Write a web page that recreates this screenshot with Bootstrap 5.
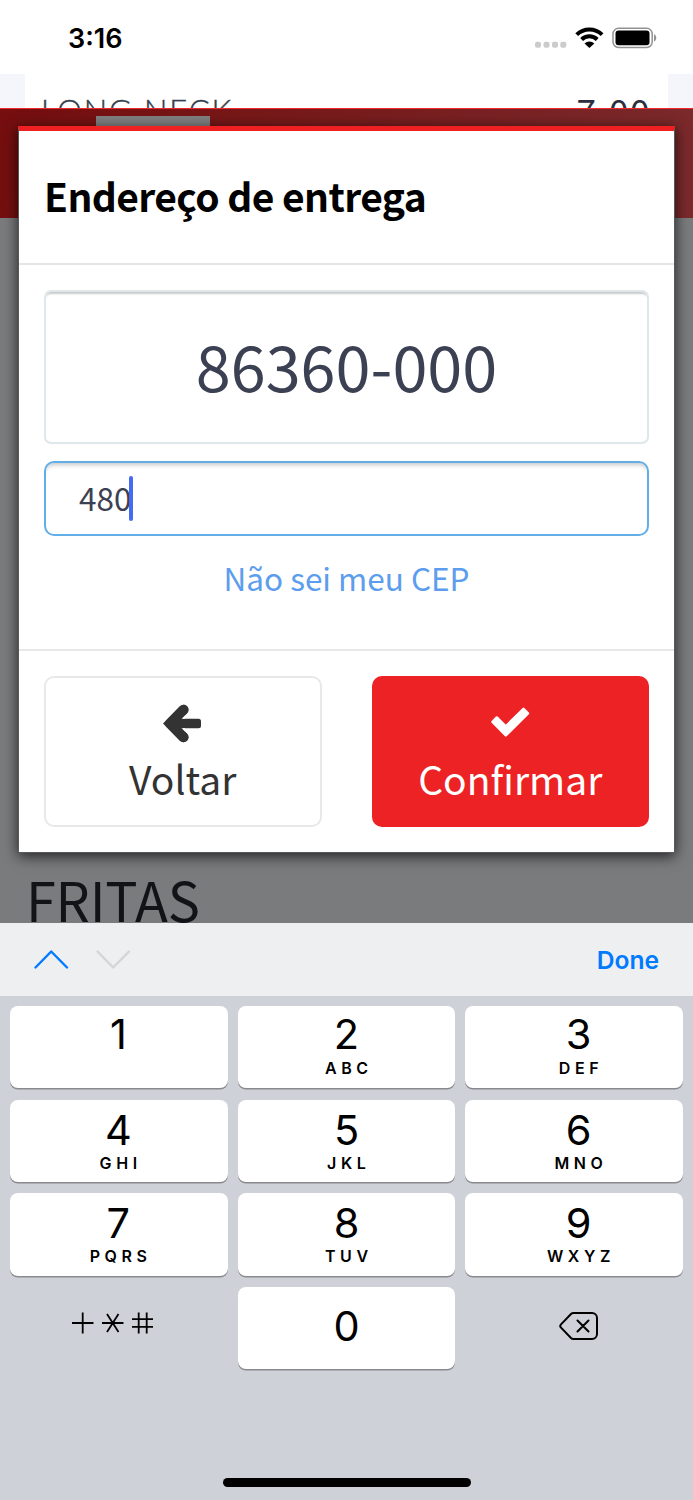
<!DOCTYPE html>
<html lang="pt-BR">
<head>
<meta charset="utf-8">
<meta name="viewport" content="width=device-width, initial-scale=1">
<title>Endereço de entrega</title>
<link href="https://cdn.jsdelivr.net/npm/bootstrap@5.3.0/dist/css/bootstrap.min.css" rel="stylesheet">
<style>
body{font-family:"Noto Sans CJK SC","Open Sans",sans-serif;background:#fff}
svg{display:block;flex:none}
.phone{width:693px;height:1500px}
.ios{font-family:Inter,"Liberation Sans",sans-serif}
.status{height:74px;padding:0 34px 0 68px}
.clock{font-size:27px;font-weight:600;line-height:30px;letter-spacing:0;margin-top:24px}
.strip{height:34px;background:#f4f6fb;padding:0 25px}
.strip-row{height:34px;padding:18px 17px 0 16px;line-height:36px}
.product{font-family:Lato,sans-serif;font-weight:300;font-size:31px;color:#34404d;letter-spacing:1.9px;-webkit-text-stroke:.4px #34404d}
.price{font-size:35px;color:#2c2f3e;letter-spacing:1.6px}
.stage{height:815px;background:#7a7b7d}
.hero-band{height:110px;top:0;left:0;right:0;border-top:1px solid #f0282b;background:linear-gradient(100deg,#750e0e,#7b2a2c)}
.hero-tab{left:96px;top:7px;width:114px;height:12px;background:#808080}
.sheet{margin:18px 18px 0;border-style:solid;border-width:5px 1px 1px;border-color:#ee2022 #58595a #58595a;border-radius:0;box-shadow:0 3px 13px rgba(0,0,0,.75)}
.sheet-head{height:134px;border-bottom:2px solid #e5e6e7;padding:0 25px 4px}
.sheet-title{font-size:39px;font-weight:600;line-height:56px;color:#000;letter-spacing:-.6px}
.sheet-body{height:386px;padding:25px 25px 0;border-bottom:2px solid #e8e8e8}
.field{border:2px solid #dfe7ea;color:#3c4053;background:#fff}
.field-cep{height:154px;font-size:63px;border-radius:7px;box-shadow:inset 0 4px 2px -2px #c9cbcc;padding-bottom:3px}
.field-num{height:75px;margin-top:17px;font-size:31.5px;border-color:#62aee7;border-radius:10px;padding:0 33px 1px;box-shadow:inset 0 5px 4px -3px #c8c8c8}
.caret{width:3.5px;height:45px;background:#446bf0;border-radius:2px;margin:0 0 0 -2px}
.help{font-size:31.5px;line-height:48px;color:#5c9ded;margin-top:17px}
.sheet-foot{height:201px;padding:25px 25px 0;gap:50px}
.act{flex:1 1 0;height:151px;border-radius:10px;padding:0;font-size:39px;line-height:58px;font-weight:400;border-width:2px;letter-spacing:0}
.act span{margin-top:5px}
.act-back,.act-back:hover{background:#fff;border-color:#e8e8e8;color:#333}
.act-ok,.act-ok:hover{background:#ed2224;border-color:#ed2224;color:#fff}
.category{font-size:54px;line-height:78px;color:#111317;margin:7px 0 0 26px;letter-spacing:-.2px}
.accessory{height:73px;background:#eeeff1;padding:0 34px}
.done{font-size:24.6px;font-weight:600;line-height:34px;color:#007aff;margin-top:1px}
.keyboard{height:504px;background:#ced1d8;padding:10px 10px 0}
.keys{display:grid;grid-template-columns:repeat(3,1fr);gap:11.3px 10px;grid-auto-rows:82.4px}
.keycap{border:0;border-radius:8px;background:#fff;color:#000;padding:0;box-shadow:0 1.5px 0 #898a8e;display:flex;flex-direction:column;align-items:center}
.num{font-size:41.5px;line-height:44px;margin-top:8px}
.sub{font-size:16px;line-height:20px;font-weight:600;letter-spacing:4.6px;margin:1px -4.6px 0 0}
.keys .col-l{padding-right:1px}.keys .col-r{padding-left:9px}
.first .num{margin-top:6px}.first .sub{margin-top:2px}
.bare{display:flex;align-items:center;justify-content:center}
.home{width:248px;height:8.5px;border-radius:5px;background:#000;margin-top:108.6px}
</style>
</head>
<body>
<div class="phone d-flex flex-column overflow-hidden">
  <header class="status ios d-flex justify-content-between">
    <div class="clock text-black">3:16</div>
    <svg width="124" height="30" viewBox="0 0 124 30" style="margin-top:23px">
      <g fill="#cbcbcb"><rect x="0" y="18.7" width="6" height="6" rx="2"/><rect x="8.5" y="18.7" width="6" height="6" rx="2"/><rect x="17" y="18.7" width="6" height="6" rx="2"/><rect x="25.3" y="18.7" width="6" height="6" rx="2"/></g>
      <g fill="none" stroke="#000" stroke-width="4"><path d="M41.7 11.6a18.3 18.3 0 0 1 25.4 0"/><path d="M46.6 16.5a11.2 11.2 0 0 1 15.6 0"/></g>
      <path d="M49.5 20.6a7 7 0 0 1 9.800 0L54.400 25z"/>
      <rect x="78.000" y="5.300" width="39.200" height="19.200" rx="5.500" fill="none" stroke="#929292" stroke-width="1.5"/>
      <rect x="80.500" y="7.600" width="34" height="14.600" rx="3" fill="#000"/>
      <path d="M119 11.200c3 1.200 3 6 0 7.400z" fill="#929292"/>
    </svg>
  </header>

  <div class="strip">
    <div class="strip-row bg-white d-flex justify-content-between overflow-hidden">
      <span class="product">LONG NECK</span><span class="price">7,00</span>
    </div>
  </div>

  <main class="stage position-relative overflow-hidden d-flex flex-column">
    <div class="hero-band position-absolute"><div class="hero-tab position-absolute"></div></div>
    <section class="sheet card">
      <div class="sheet-head d-flex align-items-center"><h1 class="sheet-title m-0">Endereço de entrega</h1></div>
      <div class="sheet-body">
        <div class="field field-cep d-flex align-items-center justify-content-center">86360-000</div>
        <div class="field field-num d-flex align-items-center"><span>480</span><span class="caret"></span></div>
        <div class="help text-center">Não sei meu CEP</div>
      </div>
      <div class="sheet-foot d-flex">
        <button class="btn act act-back d-flex flex-column align-items-center">
          <svg width="40" height="40" viewBox="0 0 40 40" style="margin-top:26px"><path d="M20.500 5.800 7 19.500 20.500 33.200" fill="none" stroke="#333" stroke-width="10" stroke-linecap="round" stroke-linejoin="round"/><path d="M20 7 8 19.500 20 32z" fill="#333"/><rect x="8" y="14.700" width="30" height="9.600" rx="2.500" fill="#333"/><path d="M17.500 14.700 22 10.200V14.700zM17.500 24.300 22 28.800V24.300z" fill="#fff"/><path d="M20.500 5.800 7 19.500 20.500 33.200" fill="none" stroke="#333" stroke-width="10" stroke-linecap="round"/></svg>
          <span>Voltar</span>
        </button>
        <button class="btn act act-ok d-flex flex-column align-items-center">
          <svg width="40" height="40" viewBox="0 0 40 40" style="margin-top:26px"><path d="M2.500 17.800 6.800 13.500 15.800 22.300 33.500 4.800 38 9.300 15.800 31.300Z" fill="#fff" stroke="#fff" stroke-width="2.500" stroke-linejoin="round"/></svg>
          <span>Confirmar</span>
        </button>
      </div>
    </section>
    <h2 class="category fw-normal">FRITAS</h2>
  </main>

  <div class="accessory ios d-flex align-items-center justify-content-between">
    <svg width="98" height="24" viewBox="0 0 98 24" fill="none" stroke-width="2.4" stroke-linecap="round" stroke-linejoin="round"><path d="M1.5 19.500 17.2 3.500 33 19.500" stroke="#007aff"/><path d="M63.500 3.500 79.200 19.500 95 3.500" stroke="#d4d5d7"/></svg>
    <span class="done">Done</span>
  </div>

  <div class="keyboard ios">
    <div class="keys">
      <button class="keycap col-l first"><span class="num">1</span></button>
      <button class="keycap first"><span class="num">2</span><span class="sub">ABC</span></button>
      <button class="keycap col-r first"><span class="num">3</span><span class="sub">DEF</span></button>
      <button class="keycap col-l"><span class="num">4</span><span class="sub">GHI</span></button>
      <button class="keycap"><span class="num">5</span><span class="sub">JKL</span></button>
      <button class="keycap col-r"><span class="num">6</span><span class="sub">MNO</span></button>
      <button class="keycap col-l"><span class="num">7</span><span class="sub">PQRS</span></button>
      <button class="keycap"><span class="num">8</span><span class="sub">TUV</span></button>
      <button class="keycap col-r"><span class="num">9</span><span class="sub">WXYZ</span></button>
      <div class="bare" style="padding:0 11px 10px 0">
        <svg width="82" height="22" viewBox="0 0 82 22" fill="none" stroke="#000" stroke-width="1.8"><path d="M0 11H21.500M10.700 .5V21.500M30 11H51.500M35 2 46.500 20M46.500 2 35 20M60 7.200H81M60 14.800H81M66.700 .5V21.500M74.700 .5V21.500"/></svg>
      </div>
      <button class="keycap justify-content-center pb-1"><span class="num m-0">0</span></button>
      <div class="bare" style="padding:0 0 4px 9px">
        <svg width="40" height="30" viewBox="0 0 40 30" fill="none" stroke="#000" stroke-width="2" stroke-linecap="round" stroke-linejoin="round"><path d="M14.500 2H33a5 5 0 0 1 5 5V23a5 5 0 0 1-5 5H14.500a3.500 3.500 0 0 1-2.500-1L2 16.600a2.300 2.300 0 0 1 0-3.200L12 3a3.500 3.500 0 0 1 2.500-1zM18.500 9.500 29.500 20.500M29.500 9.500 18.500 20.500"/></svg>
      </div>
    </div>
    <div class="home mx-auto"></div>
  </div>
</div>
<script src="https://cdn.jsdelivr.net/npm/bootstrap@5.3.0/dist/js/bootstrap.bundle.min.js"></script>
</body>
</html>
